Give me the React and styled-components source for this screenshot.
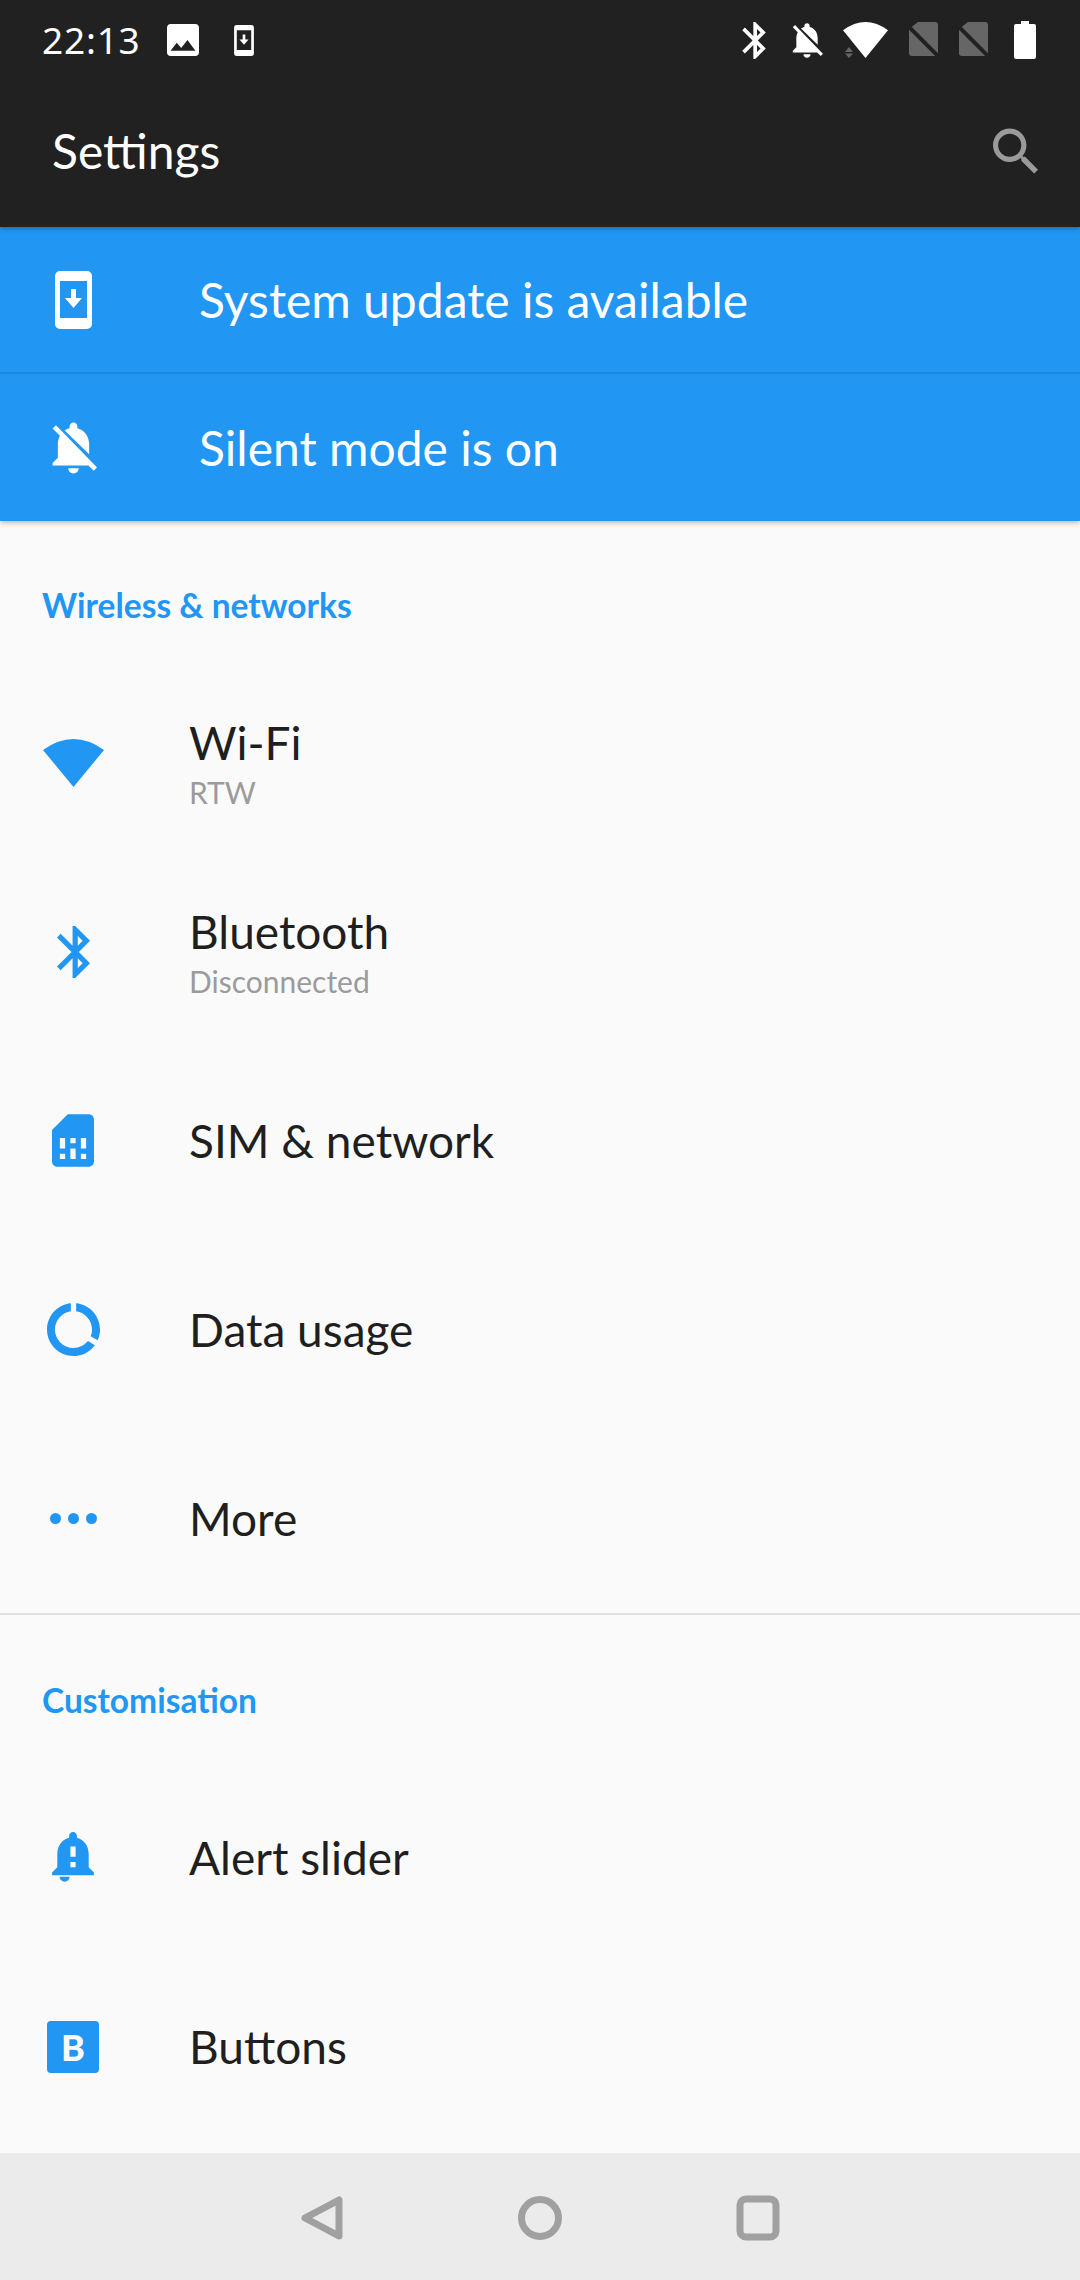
import styled, { createGlobalStyle } from "styled-components";

const blue = "#2196f3";

const GlobalStyle = createGlobalStyle`
html, body {
  margin: 0;
  padding: 0;
  background: #fafafa;
}
* {
  box-sizing: border-box;
}
`

const Screen = styled.div`
width: 1080px;
height: 2280px;
display: flex;
flex-direction: column;
overflow: hidden;
background: #fafafa;
font-family: "Lato", "Noto Sans", sans-serif;
`

const Header = styled.header`
height: 227px;
flex: none;
background: #212121;
color: #ffffff;
position: relative;
z-index: 2;
box-shadow: 0 2px 4px rgba(0, 0, 0, 0.25);
`

const StatusBar = styled.div`
height: 80px;
display: flex;
align-items: center;
padding: 0 44px 0 42px;
`

const Time = styled.span`
font-size: 37px;
line-height: 40px;
width: 125px;
letter-spacing: 0.8px;
font-family: "Noto Sans", sans-serif;
`

const StatusGroup = styled.div`
display: flex;
align-items: center;
margin-left: ${props => props.$left || 0}px;
`

const StatusIcon = styled.svg`
display: block;
flex: none;
width: ${props => props.$w}px;
height: ${props => props.$h}px;
margin-left: ${props => props.$left || 0}px;
fill: ${props => props.$fill || "currentColor"};
`

const Toolbar = styled.div`
height: 147px;
display: flex;
align-items: center;
justify-content: space-between;
padding: 0 42px 6px 52px;
`

const ToolbarTitle = styled.h1`
margin: 0;
font-size: 48px;
font-weight: 400;
line-height: 60px;
`

const Banner = styled.div`
height: ${props => props.$h}px;
flex: none;
display: flex;
align-items: center;
background: ${blue};
color: #ffffff;
border-bottom: ${props => props.$line ? "2px solid #1c86dc" : "none"};
`

const BannerStack = styled.div`
flex: none;
position: relative;
z-index: 1;
box-shadow: 0 2px 5px rgba(0, 0, 0, 0.25);
`

const IconSlot = styled.div`
width: 146px;
flex: none;
display: flex;
justify-content: center;
align-items: center;
color: ${props => props.$color || blue};
`

const Icon = styled.svg`
display: block;
width: ${props => props.$w}px;
height: ${props => props.$h}px;
fill: currentColor;
color: ${props => props.$color || "inherit"};
`

const BannerText = styled.span`
margin-left: 53px;
font-size: 48px;
font-weight: 400;
line-height: 60px;
`

const List = styled.main`
flex: 1;
min-height: 0;
overflow: hidden;
`

const SectionTitle = styled.h2`
margin: 0;
height: ${props => props.$h}px;
padding: ${props => props.$top}px 0 0 42px;
font-size: 33.5px;
line-height: 42px;
font-weight: 700;
color: ${blue};
`

const Divider = styled.div`
height: 2px;
background: #e0e0e0;
`

const Row = styled.div`
height: 189px;
display: flex;
align-items: center;
`

const RowText = styled.div`
margin-left: 43px;
padding-top: ${props => props.$sub ? 3 : 0}px;
display: flex;
flex-direction: column;
`

const RowTitle = styled.div`
font-size: 46px;
line-height: 56px;
color: #1f1f1f;
`

const RowSub = styled.div`
font-size: 30px;
line-height: 42px;
color: #9b9b9b;
`

const ButtonsBadge = styled.div`
width: 52px;
height: 52px;
border-radius: 4px;
background: ${blue};
color: #fafafa;
display: flex;
align-items: center;
justify-content: center;
font-size: 36px;
font-weight: 900;
line-height: 1;
`

const NavBar = styled.nav`
height: 127px;
flex: none;
background: #ebebeb;
display: flex;
align-items: center;
justify-content: center;
padding-top: 2px;
color: #a0a0a0;
`

const NavSlot = styled.div`
width: 218px;
flex: none;
display: flex;
justify-content: center;
`

const NavIcon = styled.svg`
display: block;
width: 44px;
height: 46px;
fill: none;
stroke: currentColor;
stroke-width: 7;
stroke-linejoin: round;
`

const paths = {
  bellOff: "M20 18.69L7.84 6.14 5.27 3.49 4 4.76l2.8 2.8v.01c-.52.99-.8 2.16-.8 3.42v5l-2 2v1h13.73l2 2L21 19.72l-1-1.03zM12 22c1.11 0 2-.89 2-2h-4c0 1.11.89 2 2 2zm6-7.32V11c0-3.08-1.64-5.64-4.5-6.32V4c0-.83-.67-1.5-1.5-1.5s-1.5.67-1.5 1.5v.68c-.15.03-.29.08-.42.12-.1.03-.2.07-.3.11h-.01c-.2.08-.4.17-.59.27-.2.1-.39.21-.57.33L18 14.68z",
  bluetooth: "M17.71 7.71L12 2h-1v7.59L6.41 5 5 6.41 10.59 12 5 17.59 6.41 19 11 14.41V22h1l5.71-5.71-4.3-4.29 4.3-4.29zM13 5.83l1.88 1.88L13 9.59V5.83zm1.88 10.46L13 18.17v-3.76l1.88 1.88z",
  sim: "M19.99 4c0-1.1-.89-2-1.99-2h-8L4 8v12c0 1.1.9 2 2 2h12c1.1 0 2-.9 2-2l-.01-16zM9 19H7v-2h2v2zm8 0h-2v-2h2v2zm-8-4H7v-4h2v4zm4 4h-2v-4h2v4zm0-6h-2v-2h2v2zm4 2h-2v-4h2v4z",
  data: "M13 2.05v3.03c3.39.49 6 3.39 6 6.92 0 .9-.18 1.75-.48 2.54l2.6 1.53c.56-1.24.88-2.62.88-4.07 0-5.18-3.95-9.45-9-9.95zM12 19c-3.87 0-7-3.13-7-7 0-3.53 2.61-6.43 6-6.92V2.05c-5.06.5-9 4.76-9 9.95 0 5.52 4.47 10 9.99 10 3.31 0 6.24-1.61 8.06-4.09l-2.6-1.53C16.17 17.98 14.21 19 12 19z",
  search: "M15.5 14h-.79l-.28-.27C15.41 12.59 16 11.11 16 9.5 16 5.91 13.09 3 9.5 3S3 5.91 3 9.5 5.91 16 9.5 16c1.61 0 3.09-.59 4.23-1.57l.27.28v.79l5 4.99L20.49 19l-4.99-5zm-6 0C7.01 14 5 11.99 5 9.5S7.01 5 9.5 5 14 7.01 14 9.5 11.99 14 9.5 14z",
  image: "M21 19V5c0-1.1-.9-2-2-2H5c-1.1 0-2 .9-2 2v14c0 1.1.9 2 2 2h14c1.1 0 2-.9 2-2zM8.5 13.5l2.5 3.01L14.5 12l4.5 6H5l3.5-4.5z",
  bell: "M18 16v-5c0-3.07-1.64-5.64-4.5-6.32V4c0-.83-.67-1.5-1.5-1.5s-1.5.67-1.5 1.5v.68C7.63 5.36 6 7.92 6 11v5l-2 2v1h16v-1l-2-2zm-5 0h-2v-2h2v2zm0-4h-2V8h2v4zM6.9 19.6h3.8c0 1-.9 1.9-1.9 1.9s-1.9-.9-1.9-1.9z",
  wifi: "M0 11Q30.5-11 61 11L30.5 48z",
  phone: "M5 0h27a5 5 0 0 1 5 5v48a5 5 0 0 1-5 5H5a5 5 0 0 1-5-5V5a5 5 0 0 1 5-5zM5 10v37h27V10zM16 18h5v9h6L18.500 37 10 27h6z",
  simOff: "M13 1H30a3 3 0 0 1 3 3V32a3 3 0 0 1-3 3H7a3 3 0 0 1-3-3V8z",
};

const NoSim = ({ left }) => (
  <StatusIcon $w={36} $h={38} $left={left} $fill="#666666" viewBox="0 0 36 38">
    <path d={paths.simOff} />
    <path d="M1 3L35 37" stroke="#212121" strokeWidth="4" />
  </StatusIcon>
);

const StatusWifi = () => (
  <StatusIcon $w={45} $h={36} $left={20} viewBox="0 0 45 36">
    <path d={paths.wifi} transform="scale(0.738 0.75)" />
    <path d="M6 25l4 5H2zM2 31.500h8l-4 4.500z" fill="#666666" />
  </StatusIcon>
);

const StatusBarView = () => (
  <StatusBar>
    <Time>22:13</Time>
    <StatusIcon $w={32} $h={32} viewBox="3 3 18 18"><path d={paths.image} fillRule="evenodd" /></StatusIcon>
    <StatusIcon $w={20} $h={31} $left={35} viewBox="0 0 37 58"><path d={paths.phone} fillRule="evenodd" /></StatusIcon>
    <StatusGroup $left={488}>
      <StatusIcon $w={24} $h={37} viewBox="5 2 12.71 20"><path d={paths.bluetooth} fillRule="evenodd" /></StatusIcon>
      <StatusIcon $w={32} $h={35} $left={25} viewBox="3 2.5 18 19.5"><path d={paths.bellOff} /></StatusIcon>
      <StatusWifi />
      <NoSim left={17} />
      <NoSim left={14} />
      <StatusIcon $w={22} $h={38} $left={23} viewBox="0 0 22 38"><path d="M7 0h8v3h5a2 2 0 0 1 2 2v31a2 2 0 0 1-2 2H2a2 2 0 0 1-2-2V5a2 2 0 0 1 2-2h5z" /></StatusIcon>
    </StatusGroup>
  </StatusBar>
);

const SettingsRow = ({ icon, title, sub }) => (
  <Row>
    <IconSlot>{icon}</IconSlot>
    <RowText $sub={!!sub}>
      <RowTitle>{title}</RowTitle>
      {sub && <RowSub>{sub}</RowSub>}
    </RowText>
  </Row>
);

const App = () => {
  return (
    <Screen>
      <GlobalStyle />
      <Header>
        <StatusBarView />
        <Toolbar>
          <ToolbarTitle>Settings</ToolbarTitle>
          <Icon $w={45} $h={46} $color="#9a9a9a" viewBox="3 3 17.49 17.49"><path d={paths.search} /></Icon>
        </Toolbar>
      </Header>

      <BannerStack>
        <Banner $h={147} $line>
          <IconSlot $color="#ffffff">
            <Icon $w={37} $h={58} viewBox="0 0 37 58"><path d={paths.phone} fillRule="evenodd" /></Icon>
          </IconSlot>
          <BannerText>System update is available</BannerText>
        </Banner>
        <Banner $h={147}>
          <IconSlot $color="#ffffff">
            <Icon $w={47} $h={54} viewBox="3 2.5 18 19.5"><path d={paths.bellOff} /></Icon>
          </IconSlot>
          <BannerText>Silent mode is on</BannerText>
        </Banner>
      </BannerStack>

      <List>
        <SectionTitle $h={147} $top={63}>Wireless &amp; networks</SectionTitle>
        <SettingsRow
          title="Wi-Fi"
          sub="RTW"
          icon={<Icon $w={61} $h={48} viewBox="0 0 61 48"><path d={paths.wifi} /></Icon>}
        />
        <SettingsRow
          title="Bluetooth"
          sub="Disconnected"
          icon={<Icon $w={33} $h={52} viewBox="5 2 12.71 20"><path d={paths.bluetooth} fillRule="evenodd" /></Icon>}
        />
        <SettingsRow
          title="SIM & network"
          icon={<Icon $w={42} $h={53} viewBox="4 2 16 20"><path d={paths.sim} /></Icon>}
        />
        <SettingsRow
          title="Data usage"
          icon={<Icon $w={53} $h={53} viewBox="2 2 20 20"><path d={paths.data} /></Icon>}
        />
        <SettingsRow
          title="More"
          icon={
            <Icon $w={47} $h={11} viewBox="0 0 47 11">
              <circle cx="5.500" cy="5.500" r="5.500" />
              <circle cx="23.500" cy="5.500" r="5.500" />
              <circle cx="41.500" cy="5.500" r="5.500" />
            </Icon>
          }
        />
        <Divider />
        <SectionTitle $h={148} $top={64}>Customisation</SectionTitle>
        <SettingsRow
          title="Alert slider"
          icon={<Icon $w={42} $h={51} viewBox="4 2.5 16 19.5"><path d={paths.bell} /></Icon>}
        />
        <SettingsRow title="Buttons" icon={<ButtonsBadge>B</ButtonsBadge>} />
      </List>

      <NavBar>
        <NavSlot>
          <NavIcon viewBox="0 0 44 46"><path d="M39 5V41L5 23z" /></NavIcon>
        </NavSlot>
        <NavSlot>
          <NavIcon viewBox="0 0 44 46"><circle cx="22" cy="23" r="18.500" /></NavIcon>
        </NavSlot>
        <NavSlot>
          <NavIcon viewBox="0 0 44 46"><rect x="4" y="4" width="36" height="38" rx="6" /></NavIcon>
        </NavSlot>
      </NavBar>
    </Screen>
  )
}

export default App;
